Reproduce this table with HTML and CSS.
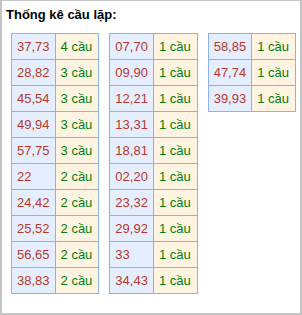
FILE: index.html
```html
<!DOCTYPE html>
<html lang="vi">
<head>
  <meta charset="UTF-8">
  <meta name="viewport" content="width=device-width, initial-scale=1.0">
  <title>Thống kê cầu lặp</title>
  <link rel="stylesheet" href="styles.css">
</head>
<body>
  <div class="khung">
    <div class="tieude">Thống kê cầu lặp:</div>
    <div class="bang-nhom">
      <table class="bang">
        <tr><td class="so">37,73</td><td class="cau">4 cầu</td></tr>
        <tr><td class="so">28,82</td><td class="cau">3 cầu</td></tr>
        <tr><td class="so">45,54</td><td class="cau">3 cầu</td></tr>
        <tr><td class="so">49,94</td><td class="cau">3 cầu</td></tr>
        <tr><td class="so">57,75</td><td class="cau">3 cầu</td></tr>
        <tr><td class="so">22</td><td class="cau">2 cầu</td></tr>
        <tr><td class="so">24,42</td><td class="cau">2 cầu</td></tr>
        <tr><td class="so">25,52</td><td class="cau">2 cầu</td></tr>
        <tr><td class="so">56,65</td><td class="cau">2 cầu</td></tr>
        <tr><td class="so">38,83</td><td class="cau">2 cầu</td></tr>
      </table>
      <table class="bang">
        <tr><td class="so">07,70</td><td class="cau">1 cầu</td></tr>
        <tr><td class="so">09,90</td><td class="cau">1 cầu</td></tr>
        <tr><td class="so">12,21</td><td class="cau">1 cầu</td></tr>
        <tr><td class="so">13,31</td><td class="cau">1 cầu</td></tr>
        <tr><td class="so">18,81</td><td class="cau">1 cầu</td></tr>
        <tr><td class="so">02,20</td><td class="cau">1 cầu</td></tr>
        <tr><td class="so">23,32</td><td class="cau">1 cầu</td></tr>
        <tr><td class="so">29,92</td><td class="cau">1 cầu</td></tr>
        <tr><td class="so">33</td><td class="cau">1 cầu</td></tr>
        <tr><td class="so">34,43</td><td class="cau">1 cầu</td></tr>
      </table>
      <table class="bang">
        <tr><td class="so">58,85</td><td class="cau">1 cầu</td></tr>
        <tr><td class="so">47,74</td><td class="cau">1 cầu</td></tr>
        <tr><td class="so">39,93</td><td class="cau">1 cầu</td></tr>
      </table>
    </div>
  </div>
</body>
</html>
```

FILE: styles.css
```css
body {
  margin: 0;
  font-family: "Liberation Sans", Arial, sans-serif;
  font-size: 13px;
}
.khung {
  box-sizing: border-box;
  width: 302px;
  height: 315px;
  border: 2px solid #c4c4c4;
  border-top: 1px solid #c4c4c4;
  background-color: #ffffff;
  padding: 6px 4px;
}
.tieude {
  font-size: 13px;
  line-height: 16px;
  font-weight: bold;
  color: #000;
}
.bang-nhom {
  display: flex;
  align-items: flex-start;
  gap: 10px;
  margin: 10px 0 0 5px;
}
.bang {
  border-collapse: collapse;
}
.bang td {
  border: 1px solid #8eb0f0;
  height: 25px;
  padding: 0 5px;
  line-height: 16px;
  white-space: nowrap;
}
.so {
  width: 32px;
  background-color: #e4eeff;
  color: #b8392b;
}
.cau {
  width: 33px;
  background-color: #fff4e2;
  color: #00800b;
}
```
